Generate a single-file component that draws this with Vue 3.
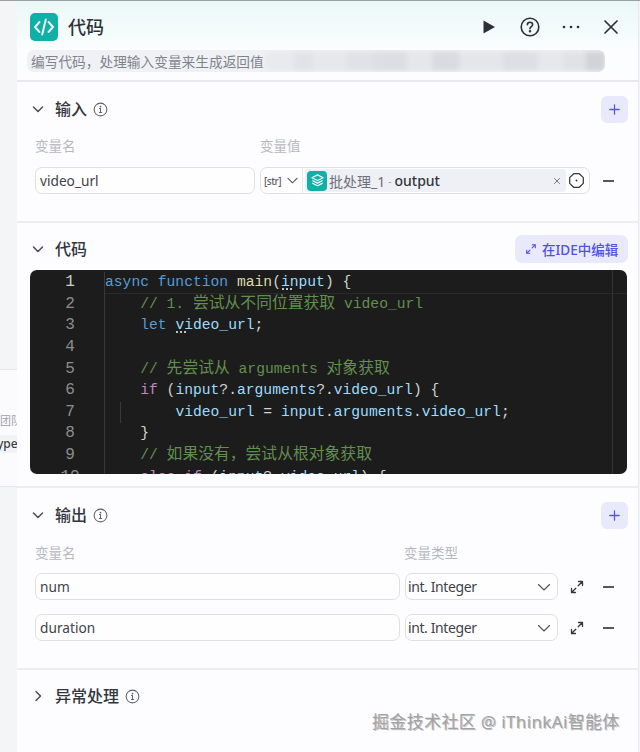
<script setup>
const codeLines = [
  { n: 1, indent: 0, t: [['k', 'async '], ['k', 'function '], ['f', 'main'], ['p', '('], ['v squig', 'input'], ['p', ') {']] },
  { n: 2, indent: 1, t: [['c', '// 1. '], ['c cjk', '尝试从不同位置获取'], ['c', ' video_url']] },
  { n: 3, indent: 1, t: [['k', 'let '], ['v squig', 'video_url'], ['p', ';']] },
  { n: 4, indent: 0, t: [] },
  { n: 5, indent: 1, t: [['c', '// '], ['c cjk', '先尝试从'], ['c', ' arguments '], ['c cjk', '对象获取']] },
  { n: 6, indent: 1, t: [['m', 'if'], ['p', ' ('], ['v', 'input'], ['p', '?.'], ['v', 'arguments'], ['p', '?.'], ['v', 'video_url'], ['p', ') {']] },
  { n: 7, indent: 2, guide: true, t: [['v', 'video_url'], ['p', ' = '], ['v', 'input'], ['p', '.'], ['v', 'arguments'], ['p', '.'], ['v', 'video_url'], ['p', ';']] },
  { n: 8, indent: 1, t: [['p', '}']] },
  { n: 9, indent: 1, t: [['c', '// '], ['c cjk', '如果没有，尝试从根对象获取']] },
  { n: 10, indent: 1, t: [['m', 'else if'], ['p', ' ('], ['v', 'input'], ['p', '?.'], ['v', 'video_url'], ['p', ') {']] }
]
const outputs = ['num', 'duration']
const mosaic = [
  [30, '#e9eaee'], [20, '#e2e3e8'], [34, '#e7e8ec'], [30, '#e1e2e7'], [34, '#dddee3'],
  [26, '#e6e7eb'], [28, '#dadbe1'], [46, '#e5e6ea'], [36, '#dedfe4'], [26, '#e7e8ec'],
  [24, '#e1e2e6'], [20, '#d2d3d8']
]
</script>

<template>
  <div class="page">
    <aside class="strip">
      <div class="strip-card">
        <span class="strip-cn">团队</span>
        <span class="strip-en">ype</span>
      </div>
    </aside>

    <main class="panel">
      <header class="head">
        <div class="head-top">
          <span class="logo">
            <svg viewBox="0 0 28 28" width="28" height="28" fill="none" stroke="#fff" stroke-width="1.900" stroke-linecap="round" stroke-linejoin="round">
              <path d="M9.500 9 5 14l4.500 5" />
              <path d="M18.500 9 23 14l-4.500 5" />
              <path d="M15.800 6.500 12.200 21.500" />
            </svg>
          </span>
          <h1 class="title">代码</h1>
          <div class="head-actions">
            <svg class="ha" viewBox="0 0 20 20" width="20" height="20"><path d="M4.500 3.500v13L16 10z" fill="#2d3038" /></svg>
            <svg class="ha" viewBox="0 0 22 22" width="22" height="22" fill="none" stroke="#2d3038" stroke-width="1.600" stroke-linecap="round">
              <circle cx="11" cy="11" r="8.800" />
              <path d="M8.400 8.800c0-1.500 1.200-2.500 2.600-2.500s2.600 1 2.600 2.400c0 2-2.600 2-2.600 4" />
              <circle cx="11" cy="15.300" r=".5" fill="#2d3038" />
            </svg>
            <svg class="ha" viewBox="0 0 20 20" width="20" height="20" fill="#2d3038"><circle cx="3" cy="10" r="1.300" /><circle cx="10" cy="10" r="1.300" /><circle cx="17" cy="10" r="1.300" /></svg>
            <svg class="ha" viewBox="0 0 20 20" width="20" height="20" fill="none" stroke="#2d3038" stroke-width="1.700" stroke-linecap="round"><path d="M4 4l12 12M16 4 4 16" /></svg>
          </div>
        </div>
        <div class="desc">
          <span class="desc-text">编写代码，处理输入变量来生成返回值</span>
          <div class="mosaic">
            <span v-for="(m, i) in mosaic" :key="i" class="mosaic-cell" :style="{ width: m[0] + 'px', background: m[1] }"></span>
          </div>
        </div>
      </header>

      <section class="sec sec-input">
        <div class="sec-head">
          <svg class="chev" viewBox="0 0 12 12" width="12" height="12"><path d="M1.500 4 6 8.500 10.500 4" /></svg>
          <h2 class="sec-title">输入</h2>
          <svg class="info" viewBox="0 0 16 16" width="15" height="15"><circle cx="8" cy="8" r="6.800" /><path d="M8 7v4.300M6.800 11.300h2.400M6.900 7H8" /><circle cx="8" cy="4.900" r=".4" /></svg>
          <button class="add">
            <svg viewBox="0 0 14 14" width="11" height="11"><path d="M7 1v12M1 7h12" /></svg>
          </button>
        </div>
        <div class="labels input-labels">
          <span class="lab-name">变量名</span>
          <span>变量值</span>
        </div>
        <div class="row">
          <div class="field name-in">video_url</div>
          <div class="value-box">
            <span class="str">[str]</span>
            <svg class="sel-chev small" viewBox="0 0 14 14" width="13" height="13"><path d="M2 4.500 7 9.500l5-5" /></svg>
            <span class="vdiv"></span>
            <div class="chip">
              <span class="chip-icon">
                <svg viewBox="0 0 16 16" width="15" height="15" fill="none" stroke="#fff" stroke-width="1.200" stroke-linejoin="round"><path d="M8 2 14 5 8 8 2 5z" /><path d="M2.500 8 8 10.800 13.500 8" /><path d="M2.500 10.800 8 13.600l5.500-2.800" /></svg>
              </span>
              <span class="chip-node">批处理_1</span>
              <span class="chip-dot">-</span>
              <span class="chip-var">output</span>
              <svg class="chip-x" viewBox="0 0 10 10" width="8" height="8"><path d="M1.500 1.500l7 7M8.500 1.500l-7 7" /></svg>
            </div>
            <svg class="hex" viewBox="0 0 18 18" width="17" height="17"><path d="M6 1.800h6l4.200 4.200v6L12 16.200H6L1.800 12V6z" /><circle cx="9" cy="9" r="1" /></svg>
          </div>
          <span class="minus"></span>
        </div>
      </section>

      <section class="sec sec-code">
        <div class="sec-head code-head">
          <svg class="chev" viewBox="0 0 12 12" width="12" height="12"><path d="M1.500 4 6 8.500 10.500 4" /></svg>
          <h2 class="sec-title">代码</h2>
          <button class="ide">
            <svg viewBox="0 0 14 14" width="12" height="12"><path d="M2 8.500V12h3.500M2 12l3.800-3.800M8.500 2H12v3.500M12 2 8.300 5.700" /></svg>
            <span>在IDE中编辑</span>
          </button>
        </div>
        <div class="editor">
          <div v-for="l in codeLines" :key="l.n" class="cl" :class="{ current: l.n === 1 }">
            <span class="ln" :class="{ active: l.n === 1 }">{{ l.n }}</span>
            <span class="code" :class="'ind' + l.indent">
              <i v-if="l.guide" class="guide"></i>
              <span v-for="(tk, i) in l.t" :key="i" :class="tk[0]">{{ tk[1] }}</span>
            </span>
          </div>
          <span class="ruler"></span>
        </div>
      </section>

      <section class="sec sec-output">
        <div class="sec-head">
          <svg class="chev" viewBox="0 0 12 12" width="12" height="12"><path d="M1.500 4 6 8.500 10.500 4" /></svg>
          <h2 class="sec-title">输出</h2>
          <svg class="info" viewBox="0 0 16 16" width="15" height="15"><circle cx="8" cy="8" r="6.800" /><path d="M8 7v4.300M6.800 11.300h2.400M6.900 7H8" /><circle cx="8" cy="4.900" r=".4" /></svg>
          <button class="add">
            <svg viewBox="0 0 14 14" width="11" height="11"><path d="M7 1v12M1 7h12" /></svg>
          </button>
        </div>
        <div class="labels output-labels">
          <span class="lab-out">变量名</span>
          <span>变量类型</span>
        </div>
        <div class="out-rows">
          <div v-for="o in outputs" :key="o" class="row">
            <div class="field out-in">{{ o }}</div>
            <div class="field sel">
              <span>int. Integer</span>
              <svg class="sel-chev" viewBox="0 0 14 14" width="14" height="14"><path d="M1.500 4.500 7 10l5.500-5.500" /></svg>
            </div>
            <svg class="expand" viewBox="0 0 14 14" width="14" height="14"><path d="M1.500 8.500v4h4M1.500 12.500 5.800 8.200M8.500 1.500h4v4M12.500 1.500 8.200 5.800" /></svg>
            <span class="minus"></span>
          </div>
        </div>
      </section>

      <section class="sec sec-error">
        <div class="sec-head">
          <svg class="chev" viewBox="0 0 12 12" width="12" height="12"><path d="M4 1.500 8.500 6 4 10.500" /></svg>
          <h2 class="sec-title">异常处理</h2>
          <svg class="info" viewBox="0 0 16 16" width="15" height="15"><circle cx="8" cy="8" r="6.800" /><path d="M8 7v4.300M6.800 11.300h2.400M6.900 7H8" /><circle cx="8" cy="4.900" r=".4" /></svg>
        </div>
      </section>
    </main>

    <span class="watermark">掘金技术社区 @ iThinkAi智能体</span>
  </div>
</template>

<style scoped>
.page {
  position: relative;
  display: flex;
  width: 640px;
  height: 752px;
  overflow: hidden;
  background: #f4f5f6;
  border-top: 1px solid #9aa09f;
  box-sizing: border-box;
  font-family: "Noto Sans", "Noto Sans CJK SC", sans-serif;
  color: #2d3038;
}
.strip {
  width: 17px;
  flex: none;
  padding-top: 368px;
  box-sizing: border-box;
}
.strip-card {
  height: 118px;
  background: #fbfafd;
  border-top: 1px solid #e3e4e8;
  border-bottom: 1px solid #e3e4e8;
  box-sizing: border-box;
  padding-top: 43px;
  display: flex;
  flex-direction: column;
  overflow: hidden;
}
.strip-cn {
  font-size: 11px;
  line-height: 16px;
  color: #a0a2a8;
  white-space: nowrap;
}
.strip-en {
  margin-top: 6px;
  font-size: 12px;
  line-height: 18px;
  font-weight: 500;
  color: #3b3e46;
  background: #f1f2f5;
  margin-left: -3px;
}
.panel {
  width: 622px;
  flex: none;
  background: #fdfdff;
  border-right: 1px solid #e8e9ee;
  box-sizing: border-box;
  display: flex;
  flex-direction: column;
}
.head {
  height: 81px;
  flex: none;
  box-sizing: border-box;
  padding: 12px 0 0 10px;
  background: linear-gradient(180deg, #eaf8f7 0%, #fbfdfe 62%, #fdfdff 100%);
  border-bottom: 2px solid #e8e9ec;
}
.head-top {
  display: flex;
  align-items: center;
  padding-left: 3px;
  height: 28px;
}
.logo {
  width: 28px;
  height: 28px;
  flex: none;
  border-radius: 5px;
  background: #0fb0a8;
  display: flex;
}
.title {
  margin: 0 0 0 10px;
  font-size: 18px;
  line-height: 28px;
  font-weight: 500;
  color: #2f3138;
}
.head-actions {
  margin-left: auto;
  display: flex;
  align-items: center;
  width: 142px;
  justify-content: space-between;
  padding-right: 17px;
  box-sizing: content-box;
}
.desc {
  position: relative;
  margin-top: 9px;
  width: 578px;
  height: 22px;
  box-sizing: border-box;
  border-radius: 7px;
  background: #f0f1f5;
  padding-left: 4px;
  overflow: hidden;
}
.desc-text {
  font-size: 13.700px;
  line-height: 22px;
  color: #80838c;
  white-space: nowrap;
}
.mosaic {
  position: absolute;
  left: 238px;
  right: 0;
  top: 1px;
  bottom: 1px;
  display: flex;
  filter: blur(2.500px);
}
.mosaic-cell {
  height: 100%;
}
.sec {
  flex: none;
  box-sizing: border-box;
  border-bottom: 2px solid #eceded;
}
.sec-input {
  height: 141px;
  padding: 13px 0 0 15px;
}
.sec-code {
  height: 265px;
  padding: 12px 0 0 13px;
}
.sec-output {
  height: 182px;
  padding: 13px 0 0 15px;
}
.sec-error {
  border-bottom: none;
  padding: 12px 0 0 15px;
}
.sec-head {
  display: flex;
  align-items: center;
  height: 28px;
}
.code-head {
  padding-left: 2px;
}
.chev {
  width: 12px;
  height: 12px;
  flex: none;
  fill: none;
  stroke: #4a4d55;
  stroke-width: 1.500;
  stroke-linecap: round;
  stroke-linejoin: round;
}
.sec-title {
  margin: 0 0 0 11px;
  font-size: 16px;
  line-height: 24px;
  font-weight: 500;
  color: #33363d;
}
.info {
  margin-left: 6px;
  fill: none;
  stroke: #5c5f67;
  stroke-width: 1.100;
  stroke-linecap: round;
}
.add {
  margin-left: auto;
  margin-right: 10px;
  width: 27px;
  height: 27px;
  border: none;
  padding: 0;
  border-radius: 6px;
  background: #e8e9fb;
  display: flex;
  align-items: center;
  justify-content: center;
}
.add svg {
  fill: none;
  stroke: #5257e0;
  stroke-width: 1.600;
  stroke-linecap: round;
}
.labels {
  display: flex;
  font-size: 13.500px;
  line-height: 20px;
  color: #b6b8be;
  padding-left: 3px;
}
.input-labels {
  margin-top: 13px;
}
.output-labels {
  margin-top: 14px;
}
.lab-name {
  width: 225px;
}
.lab-out {
  width: 369px;
}
.row {
  display: flex;
  align-items: center;
}
.sec-input .row {
  margin-top: 11px;
  padding-left: 3px;
}
.field {
  height: 27px;
  box-sizing: border-box;
  border: 1px solid #dfe0e5;
  border-radius: 7px;
  background: #fefefe;
  font-size: 13.700px;
  line-height: 25px;
  padding-left: 4px;
  color: #3f424a;
}
.name-in {
  width: 220px;
}
.value-box {
  margin-left: 5px;
  width: 330px;
  height: 27px;
  box-sizing: border-box;
  border: 1px solid #dfe0e5;
  border-radius: 7px;
  background: #fefefe;
  display: flex;
  align-items: center;
  padding-left: 3px;
}
.str {
  font-size: 10px;
  letter-spacing: -0.500px;
  font-weight: 500;
  color: #5a5d65;
  width: 19px;
  flex: none;
}
.sel-chev {
  fill: none;
  stroke: #50535b;
  stroke-width: 1.100;
  stroke-linecap: round;
  stroke-linejoin: round;
  flex: none;
}
.small {
  margin-left: 3px;
}
.vdiv {
  width: 1px;
  height: 25px;
  background: #e7e8ec;
  margin-left: 3px;
  flex: none;
}
.chip {
  margin-left: 2px;
  width: 261px;
  height: 23px;
  flex: none;
  box-sizing: border-box;
  background: #eff0f5;
  border-radius: 3px;
  display: flex;
  align-items: center;
  padding-left: 2px;
  font-size: 14px;
}
.chip-icon {
  width: 20px;
  height: 20px;
  flex: none;
  border-radius: 4px;
  background: #0fb0a8;
  display: flex;
  align-items: center;
  justify-content: center;
}
.chip-node {
  margin-left: 2px;
  color: #6c6f77;
}
.chip-dot {
  margin: 0 3px;
  color: #9a9ca3;
  font-size: 10px;
}
.chip-var {
  color: #33363d;
  font-weight: 500;
}
.chip-x {
  margin-left: auto;
  margin-right: 5px;
  fill: none;
  stroke: #70737a;
  stroke-width: 1.200;
}
.hex {
  margin-left: 2px;
  fill: none;
  stroke: #33363d;
  stroke-width: 1.300;
  stroke-linejoin: round;
}
.hex circle {
  fill: #33363d;
  stroke: none;
}
.minus {
  width: 11px;
  height: 2px;
  background: #55585f;
  margin-left: 13px;
  flex: none;
}
.ide {
  margin-left: auto;
  margin-right: 10px;
  width: 113px;
  height: 28px;
  border: none;
  border-radius: 7px;
  background: #e9e9fb;
  color: #4d53e8;
  font-family: inherit;
  font-size: 13.500px;
  font-weight: 500;
  padding: 0 0 0 10px;
  display: flex;
  align-items: center;
  gap: 5px;
  white-space: nowrap;
}
.ide svg {
  fill: none;
  stroke: #4d53e8;
  stroke-width: 1.300;
  stroke-linecap: round;
  stroke-linejoin: round;
  flex: none;
}
.editor {
  position: relative;
  margin-top: 7px;
  width: 597px;
  height: 204px;
  background: #1c1c1c;
  border-radius: 7px;
  overflow: hidden;
  font-family: "Liberation Mono", "Noto Sans CJK SC", monospace;
  font-size: 14.670px;
  padding-top: 2px;
  box-sizing: border-box;
}
.cl {
  display: flex;
  height: 21.650px;
  line-height: 21.650px;
  white-space: pre;
}
.current .code {
  border-bottom: 1px solid #2a2a2a;
}
.ln {
  width: 75px;
  flex: none;
  box-sizing: border-box;
  text-align: center;
  padding-left: 6px;
  color: #8d8d8d;
  border-right: 1px solid #383838;
  font-size: 16px;
}
.ln.active {
  color: #cfcfcf;
}
.code {
  position: relative;
  flex: 1;
  min-width: 0;
  height: 21.650px;
  box-sizing: border-box;
}
.ind1 {
  padding-left: 35.200px;
}
.ind2 {
  padding-left: 70.400px;
}
.guide {
  position: absolute;
  left: 15px;
  top: 0;
  bottom: 0;
  width: 1px;
  background: #3a3a3a;
}
.k { color: #569cd6; }
.f { color: #dcdcaa; }
.v { color: #9cdcfe; }
.p { color: #d4d4d4; }
.m { color: #c586c0; }
.c { color: #628f4e; }
.cjk {
  font-family: "Noto Sans CJK SC", sans-serif;
  font-size: 15.800px;
  line-height: 0;
}
.squig {
  position: relative;
}
.squig::after {
  content: "";
  position: absolute;
  left: 0;
  bottom: 0;
  width: 12px;
  height: 2px;
  background-image: radial-gradient(circle, #c8c8c8 0.700px, transparent 0.900px);
  background-size: 4px 2px;
}
.ruler {
  position: absolute;
  left: 582px;
  top: 0;
  bottom: 0;
  width: 1px;
  background: #333;
}
.out-rows {
  margin-top: 10px;
  display: flex;
  flex-direction: column;
  gap: 14px;
  padding-left: 3px;
}
.out-in {
  width: 365px;
}
.sel {
  margin-left: 5px;
  width: 153px;
  display: flex;
  align-items: center;
  justify-content: space-between;
  padding: 0 6px 0 2px;
  font-size: 14px;
  letter-spacing: -0.400px;
}
.expand {
  margin-left: 12px;
  flex: none;
  fill: none;
  stroke: #33363d;
  stroke-width: 1.300;
  stroke-linecap: round;
  stroke-linejoin: round;
}
.out-rows .minus {
  margin-left: 19px;
}
.watermark {
  position: absolute;
  left: 372px;
  top: 708px;
  font-size: 17px;
  letter-spacing: 0.350px;
  line-height: 26px;
  color: #a3a3a3;
  white-space: nowrap;
  text-shadow: 1px 1px 0 #55555555;
}
</style>
